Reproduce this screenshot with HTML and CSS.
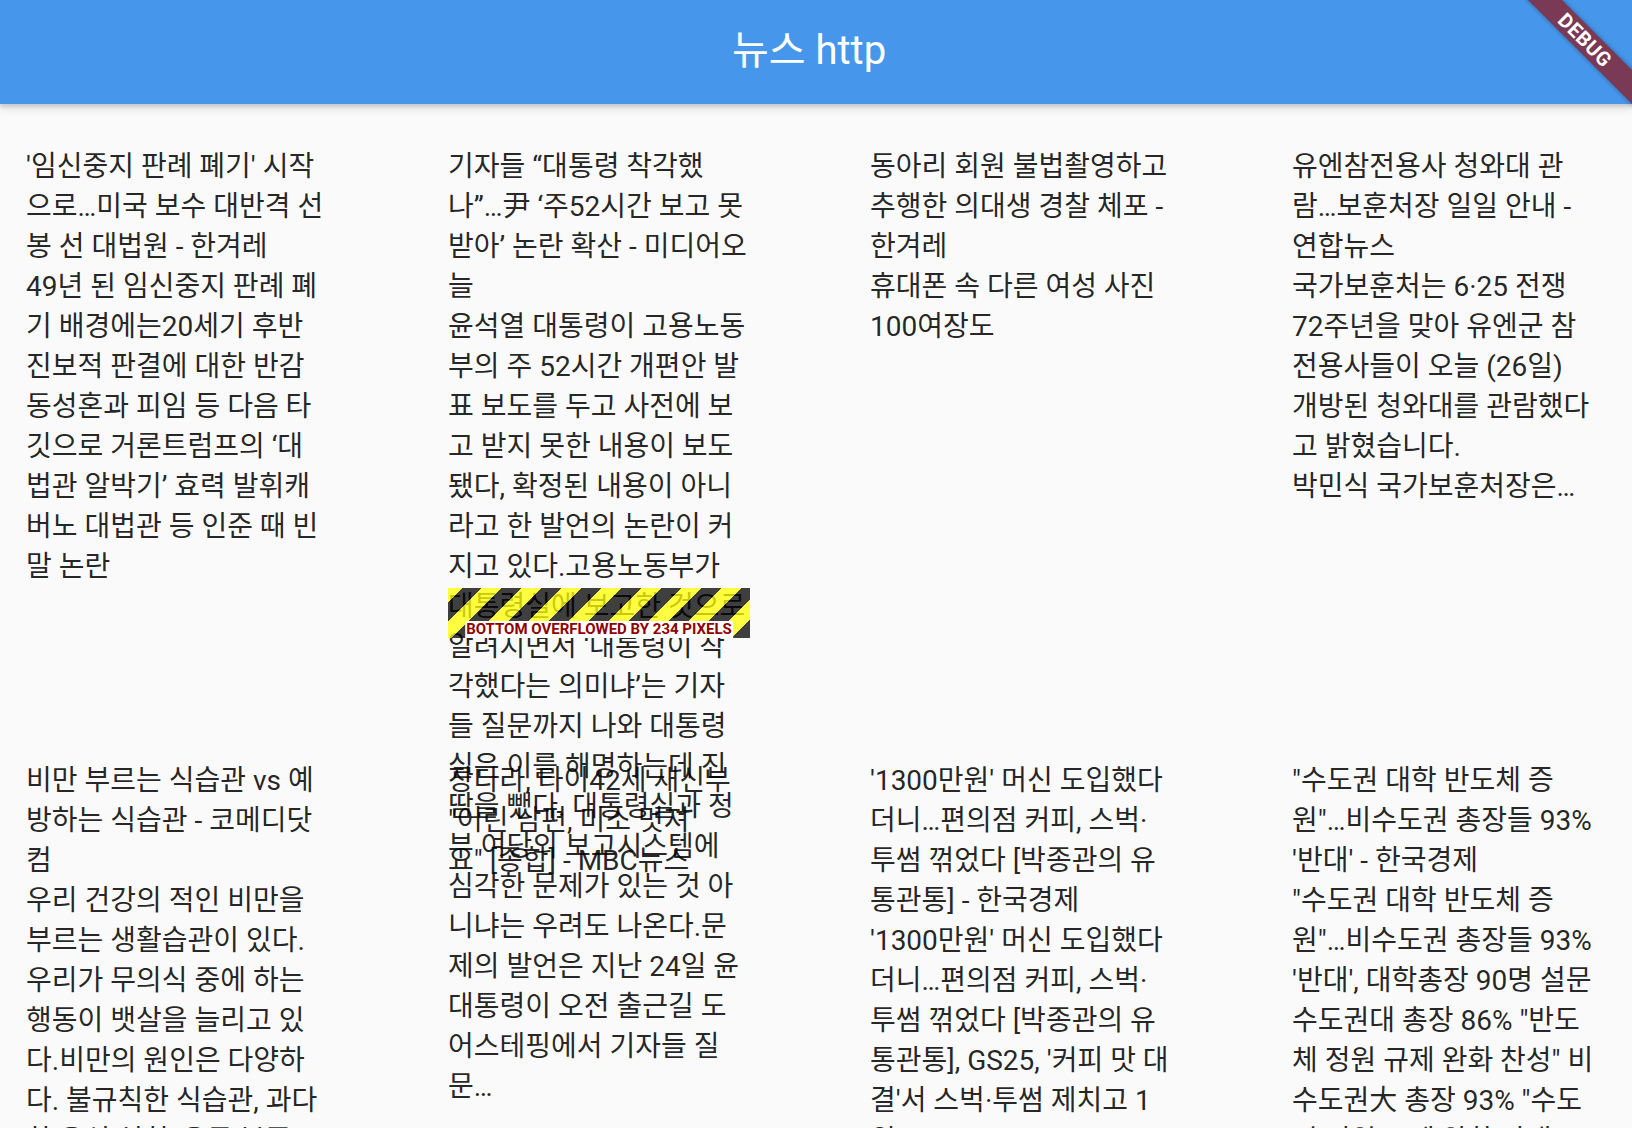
FILE: index.html
```html
<!DOCTYPE html>
<html lang="ko">
  <head>
    <meta charset="UTF-8" />
    <meta name="viewport" content="width=device-width, initial-scale=1.0" />
    <title>뉴스 http</title>
    <link rel="stylesheet" href="styles.css">
  </head>
  <body>
    <header class="app-bar">
      <h1>뉴스 http</h1>
    </header>
    <div class="debug-banner">DEBUG</div>

    <main class="news-grid">
      <article class="news-item">
        <p class="title">'임신중지 판례 폐기' 시작<br>으로…미국 보수 대반격 선<br>봉 선 대법원 - 한겨레</p>
        <p class="desc">49년 된 임신중지 판례 폐<br>기 배경에는20세기 후반<br>진보적 판결에 대한 반감<br>동성혼과 피임 등 다음 타<br>깃으로 거론트럼프의 ‘대<br>법관 알박기’ 효력 발휘캐<br>버노 대법관 등 인준 때 빈<br>말 논란</p>
      </article>

      <article class="news-item">
        <p class="title">기자들 “대통령 착각했<br>나”…尹 ‘주52시간 보고 못<br>받아’ 논란 확산 - 미디어오<br>늘</p>
        <p class="desc">윤석열 대통령이 고용노동<br>부의 주 52시간 개편안 발<br>표 보도를 두고 사전에 보<br>고 받지 못한 내용이 보도<br>됐다, 확정된 내용이 아니<br>라고 한 발언의 논란이 커<br>지고 있다.고용노동부가<br>대통령실에 보고한 것으로<br>알려지면서 ‘대통령이 착<br>각했다는 의미냐’는 기자<br>들 질문까지 나와 대통령<br>실은 이를 해명하는데 진<br>땀을 뺐다. 대통령실과 정<br>부 여당의 보고시스템에<br>심각한 문제가 있는 것 아<br>니냐는 우려도 나온다.문<br>제의 발언은 지난 24일 윤<br>대통령이 오전 출근길 도<br>어스테핑에서 기자들 질<br>문…</p>
        <div class="overflow-mark"><span>BOTTOM OVERFLOWED BY 234 PIXELS</span></div>
      </article>

      <article class="news-item">
        <p class="title">동아리 회원 불법촬영하고<br>추행한 의대생 경찰 체포 -<br>한겨레</p>
        <p class="desc">휴대폰 속 다른 여성 사진<br>100여장도</p>
      </article>

      <article class="news-item">
        <p class="title">유엔참전용사 청와대 관<br>람…보훈처장 일일 안내 -<br>연합뉴스</p>
        <p class="desc">국가보훈처는 6·25 전쟁<br>72주년을 맞아 유엔군 참<br>전용사들이 오늘 (26일)<br>개방된 청와대를 관람했다<br>고 밝혔습니다.<br>박민식 국가보훈처장은…</p>
      </article>

      <article class="news-item">
        <p class="title">비만 부르는 식습관 vs 예<br>방하는 식습관 - 코메디닷<br>컴</p>
        <p class="desc">우리 건강의 적인 비만을<br>부르는 생활습관이 있다.<br>우리가 무의식 중에 하는<br>행동이 뱃살을 늘리고 있<br>다.비만의 원인은 다양하<br>다. 불규칙한 식습관, 과다<br>한 음식 섭취, 운동 부족</p>
      </article>

      <article class="news-item">
        <p class="title">장다라, 타이42세 새신부<br>"어린 남편, 미소 멋져<br>요" [종합] - MBC뉴스</p>
      </article>

      <article class="news-item">
        <p class="title">'1300만원' 머신 도입했다<br>더니…편의점 커피, 스벅·<br>투썸 꺾었다 [박종관의 유<br>통관통] - 한국경제</p>
        <p class="desc">'1300만원' 머신 도입했다<br>더니…편의점 커피, 스벅·<br>투썸 꺾었다 [박종관의 유<br>통관통], GS25, '커피 맛 대<br>결'서 스벅·투썸 제치고 1<br>위…</p>
      </article>

      <article class="news-item">
        <p class="title">"수도권 대학 반도체 증<br>원"…비수도권 총장들 93%<br>'반대' - 한국경제</p>
        <p class="desc">"수도권 대학 반도체 증<br>원"…비수도권 총장들 93%<br>'반대', 대학총장 90명 설문<br>수도권대 총장 86% "반도<br>체 정원 규제 완화 찬성" 비<br>수도권大 총장 93% "수도<br>권 정원 규제 완화 반대"…</p>
      </article>
    </main>
  </body>
</html>
```

FILE: styles.css
```css
* {
  margin: 0;
  padding: 0;
  box-sizing: border-box;
}
body {
  height: 100vh;
  overflow: hidden;
  background-color: #fafafa;
  font-family: Roboto, "Noto Sans CJK KR", sans-serif;
  color: rgba(0, 0, 0, 0.87);
}
.app-bar {
  position: relative;
  z-index: 2;
  height: 104px;
  display: flex;
  justify-content: center;
  align-items: center;
  padding-right: 14px;
  background-color: #4697ec;
  box-shadow: 0 3px 3px rgba(0, 0, 0, 0.12), 0 6px 8px rgba(0, 0, 0, 0.08);
}
.app-bar h1 {
  color: white;
  font-size: 40px;
  font-weight: 400;
  line-height: 1;
  margin-top: -2px;
}
.debug-banner {
  position: absolute;
  z-index: 3;
  top: 28px;
  left: 1465px;
  width: 240px;
  height: 24px;
  transform: rotate(45deg);
  background-color: #7a3955;
  box-shadow: 0 0 5px rgba(0, 0, 0, 0.35);
  color: white;
  font-size: 20px;
  font-weight: 700;
  line-height: 24px;
  text-align: center;
  letter-spacing: 0.5px;
}
.news-grid {
  display: grid;
  grid-template-columns: repeat(4, 302px);
  grid-auto-rows: 491px;
  column-gap: 120px;
  row-gap: 123px;
  padding: 43px 0 0 26px;
}
.news-item {
  position: relative;
  font-size: 28px;
  line-height: 40px;
  white-space: nowrap;
}
.overflow-mark {
  position: absolute;
  left: 0;
  right: 0;
  bottom: 0;
  height: 50px;
  background: repeating-linear-gradient(
    135deg,
    rgba(255, 255, 0, 0.75) 0 9.9px,
    rgba(0, 0, 0, 0.75) 9.9px 24.04px,
    rgba(255, 255, 0, 0.75) 24.04px 28.28px
  );
}
.overflow-mark span {
  position: absolute;
  bottom: 0;
  left: 50%;
  transform: translateX(-50%);
  padding: 0 1px;
  background-color: white;
  color: #900000;
  font-size: 15px;
  font-weight: 700;
  line-height: 17px;
}
```
